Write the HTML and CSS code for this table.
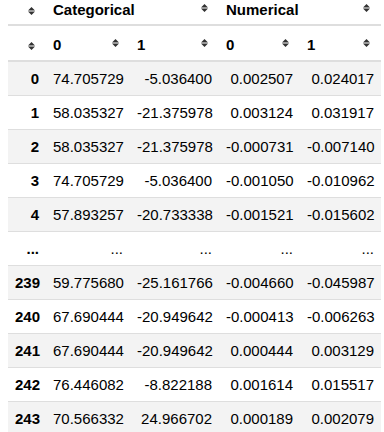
FILE: index.html
```html
<!DOCTYPE html>
<html>
<head>
<meta charset="utf-8">
<link rel="stylesheet" href="styles.css">
</head>
<body>
<table class="df">
  <colgroup>
    <col class="c-idx"><col class="c-a"><col class="c-b"><col class="c-c"><col class="c-d">
  </colgroup>
  <thead>
    <tr class="hr1">
      <th><div class="th-in"><span></span><svg class="sort" width="7" height="8" viewBox="0 0 7 8"><path d="M3.5 0L7 3.4H0Z M0 4.6H7L3.5 8Z"/></svg></div></th>
      <th colspan="2"><div class="th-in"><span>Categorical</span><svg class="sort" width="7" height="8" viewBox="0 0 7 8"><path d="M3.5 0L7 3.4H0Z M0 4.6H7L3.5 8Z"/></svg></div></th>
      <th colspan="2"><div class="th-in"><span>Numerical</span><svg class="sort" width="7" height="8" viewBox="0 0 7 8"><path d="M3.5 0L7 3.4H0Z M0 4.6H7L3.5 8Z"/></svg></div></th>
    </tr>
    <tr class="hr2">
      <th><div class="th-in"><span></span><svg class="sort" width="7" height="8" viewBox="0 0 7 8"><path d="M3.5 0L7 3.4H0Z M0 4.6H7L3.5 8Z"/></svg></div></th>
      <th><div class="th-in"><span>0</span><svg class="sort" width="7" height="8" viewBox="0 0 7 8"><path d="M3.5 0L7 3.4H0Z M0 4.6H7L3.5 8Z"/></svg></div></th>
      <th><div class="th-in"><span>1</span><svg class="sort" width="7" height="8" viewBox="0 0 7 8"><path d="M3.5 0L7 3.4H0Z M0 4.6H7L3.5 8Z"/></svg></div></th>
      <th><div class="th-in"><span>0</span><svg class="sort" width="7" height="8" viewBox="0 0 7 8"><path d="M3.5 0L7 3.4H0Z M0 4.6H7L3.5 8Z"/></svg></div></th>
      <th><div class="th-in"><span>1</span><svg class="sort" width="7" height="8" viewBox="0 0 7 8"><path d="M3.5 0L7 3.4H0Z M0 4.6H7L3.5 8Z"/></svg></div></th>
    </tr>
  </thead>
  <tbody>
    <tr><td class="idx">0</td><td>74.705729</td><td>-5.036400</td><td>0.002507</td><td>0.024017</td></tr>
    <tr><td class="idx">1</td><td>58.035327</td><td>-21.375978</td><td>0.003124</td><td>0.031917</td></tr>
    <tr><td class="idx">2</td><td>58.035327</td><td>-21.375978</td><td>-0.000731</td><td>-0.007140</td></tr>
    <tr><td class="idx">3</td><td>74.705729</td><td>-5.036400</td><td>-0.001050</td><td>-0.010962</td></tr>
    <tr><td class="idx">4</td><td>57.893257</td><td>-20.733338</td><td>-0.001521</td><td>-0.015602</td></tr>
    <tr><td class="idx">...</td><td>...</td><td>...</td><td>...</td><td>...</td></tr>
    <tr><td class="idx">239</td><td>59.775680</td><td>-25.161766</td><td>-0.004660</td><td>-0.045987</td></tr>
    <tr><td class="idx">240</td><td>67.690444</td><td>-20.949642</td><td>-0.000413</td><td>-0.006263</td></tr>
    <tr><td class="idx">241</td><td>67.690444</td><td>-20.949642</td><td>0.000444</td><td>0.003129</td></tr>
    <tr><td class="idx">242</td><td>76.446082</td><td>-8.822188</td><td>0.001614</td><td>0.015517</td></tr>
    <tr><td class="idx">243</td><td>70.566332</td><td>24.966702</td><td>0.000189</td><td>0.002079</td></tr>
  </tbody>
</table>
</body>
</html>
```

FILE: styles.css
```css
body {
  margin: 0 0 0 8px;
  font-family: "Liberation Sans", Arial, sans-serif;
  font-size: 15px;
  color: #000;
  background: #fff;
}

.df {
  border-collapse: collapse;
  border-spacing: 0;
  table-layout: fixed;
  width: 373px;
}

.c-idx { width: 38px; }
.c-a { width: 84px; }
.c-b { width: 89px; }
.c-c { width: 81px; }
.c-d { width: 81px; }

.df th {
  padding: 10px 11px 7px 7px;
  text-align: left;
  font-weight: bold;
  line-height: 17px;
  border-bottom: 2px solid #dedede;
}

.df .hr1 th {
  padding-top: 1px;
  padding-bottom: 6px;
}

.th-in {
  display: flex;
  justify-content: space-between;
  align-items: flex-start;
}

.sort {
  flex: none;
  margin-top: 3px;
  fill: #333;
}

.df td {
  padding: 8px 7px;
  text-align: right;
  line-height: 17px;
  border-bottom: 1px solid #dedede;
  white-space: nowrap;
}

.df td.idx {
  font-weight: bold;
}

.df tbody tr:nth-child(odd) {
  background: #f3f3f3;
}
```
